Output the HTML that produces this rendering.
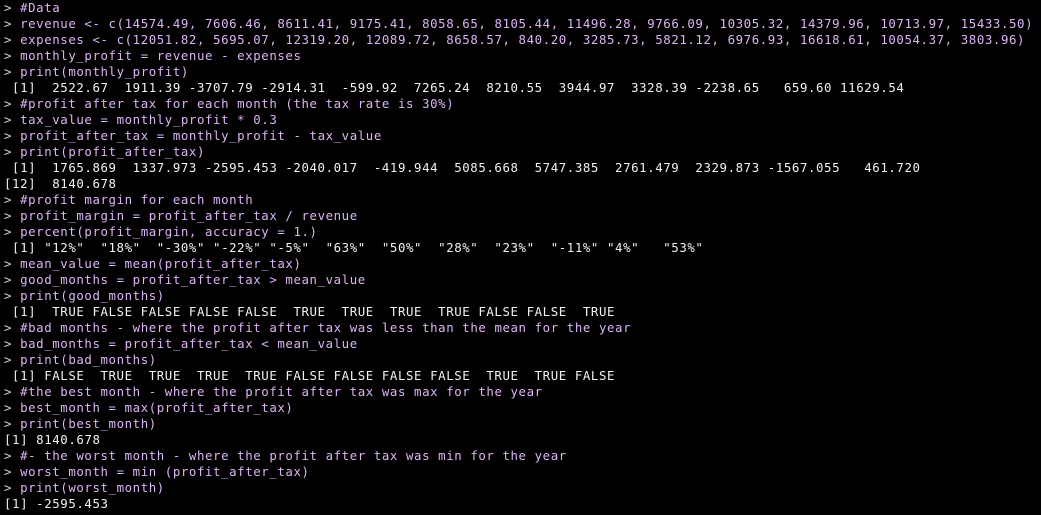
<!DOCTYPE html>
<html><head><meta charset="utf-8"><style>
html,body{margin:0;padding:0;background:#000;width:1041px;height:515px;overflow:hidden}
pre{margin:0;position:absolute;left:4px;top:0px;font-family:"DejaVu Sans Mono","Liberation Mono",monospace;font-size:12.4px;line-height:16px;color:#f2f2f2;letter-spacing:0.58px}
.c{color:#dcb4f5}.p{color:#c8d4f0}
</style></head><body><pre><span class="p">&gt; </span><span class="c">#Data</span>
<span class="p">&gt; </span><span class="c">revenue &lt;- c(14574.49, 7606.46, 8611.41, 9175.41, 8058.65, 8105.44, 11496.28, 9766.09, 10305.32, 14379.96, 10713.97, 15433.50)</span>
<span class="p">&gt; </span><span class="c">expenses &lt;- c(12051.82, 5695.07, 12319.20, 12089.72, 8658.57, 840.20, 3285.73, 5821.12, 6976.93, 16618.61, 10054.37, 3803.96)</span>
<span class="p">&gt; </span><span class="c">monthly_profit = revenue - expenses</span>
<span class="p">&gt; </span><span class="c">print(monthly_profit)</span>
 [1]  2522.67  1911.39 -3707.79 -2914.31  -599.92  7265.24  8210.55  3944.97  3328.39 -2238.65   659.60 11629.54
<span class="p">&gt; </span><span class="c">#profit after tax for each month (the tax rate is 30%)</span>
<span class="p">&gt; </span><span class="c">tax_value = monthly_profit * 0.3</span>
<span class="p">&gt; </span><span class="c">profit_after_tax = monthly_profit - tax_value</span>
<span class="p">&gt; </span><span class="c">print(profit_after_tax)</span>
 [1]  1765.869  1337.973 -2595.453 -2040.017  -419.944  5085.668  5747.385  2761.479  2329.873 -1567.055   461.720
[12]  8140.678
<span class="p">&gt; </span><span class="c">#profit margin for each month</span>
<span class="p">&gt; </span><span class="c">profit_margin = profit_after_tax / revenue</span>
<span class="p">&gt; </span><span class="c">percent(profit_margin, accuracy = 1.)</span>
 [1] "12%"  "18%"  "-30%" "-22%" "-5%"  "63%"  "50%"  "28%"  "23%"  "-11%" "4%"   "53%" 
<span class="p">&gt; </span><span class="c">mean_value = mean(profit_after_tax)</span>
<span class="p">&gt; </span><span class="c">good_months = profit_after_tax &gt; mean_value</span>
<span class="p">&gt; </span><span class="c">print(good_months)</span>
 [1]  TRUE FALSE FALSE FALSE FALSE  TRUE  TRUE  TRUE  TRUE FALSE FALSE  TRUE
<span class="p">&gt; </span><span class="c">#bad months - where the profit after tax was less than the mean for the year</span>
<span class="p">&gt; </span><span class="c">bad_months = profit_after_tax &lt; mean_value</span>
<span class="p">&gt; </span><span class="c">print(bad_months)</span>
 [1] FALSE  TRUE  TRUE  TRUE  TRUE FALSE FALSE FALSE FALSE  TRUE  TRUE FALSE
<span class="p">&gt; </span><span class="c">#the best month - where the profit after tax was max for the year</span>
<span class="p">&gt; </span><span class="c">best_month = max(profit_after_tax)</span>
<span class="p">&gt; </span><span class="c">print(best_month)</span>
[1] 8140.678
<span class="p">&gt; </span><span class="c">#- the worst month - where the profit after tax was min for the year</span>
<span class="p">&gt; </span><span class="c">worst_month = min (profit_after_tax)</span>
<span class="p">&gt; </span><span class="c">print(worst_month)</span>
[1] -2595.453</pre></body></html>
